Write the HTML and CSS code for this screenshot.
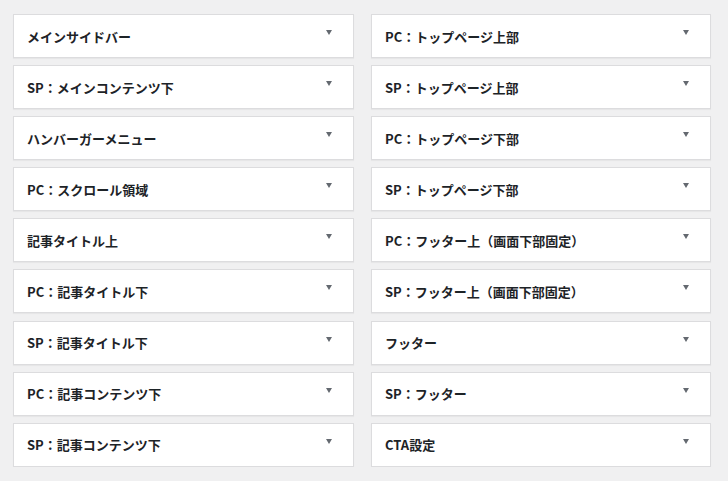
FILE: index.html
```html
<!DOCTYPE html>
<html lang="ja">
<head>
    <meta charset="UTF-8">
    <meta name="viewport" content="width=device-width, initial-scale=1.0">
    <title>ウィジェット</title>
    <link rel="stylesheet" href="styles.css">
</head>
<body>
    <div class="widget-areas">
        <div class="column">
            <div class="area"><h3>メインサイドバー</h3><span class="toggle"></span></div>
            <div class="area"><h3>SP：メインコンテンツ下</h3><span class="toggle"></span></div>
            <div class="area"><h3>ハンバーガーメニュー</h3><span class="toggle"></span></div>
            <div class="area"><h3>PC：スクロール領域</h3><span class="toggle"></span></div>
            <div class="area"><h3>記事タイトル上</h3><span class="toggle"></span></div>
            <div class="area"><h3>PC：記事タイトル下</h3><span class="toggle"></span></div>
            <div class="area"><h3>SP：記事タイトル下</h3><span class="toggle"></span></div>
            <div class="area"><h3>PC：記事コンテンツ下</h3><span class="toggle"></span></div>
            <div class="area"><h3>SP：記事コンテンツ下</h3><span class="toggle"></span></div>
        </div>

        <div class="column">
            <div class="area"><h3>PC：トップページ上部</h3><span class="toggle"></span></div>
            <div class="area"><h3>SP：トップページ上部</h3><span class="toggle"></span></div>
            <div class="area"><h3>PC：トップページ下部</h3><span class="toggle"></span></div>
            <div class="area"><h3>SP：トップページ下部</h3><span class="toggle"></span></div>
            <div class="area"><h3>PC：フッター上（画面下部固定）</h3><span class="toggle"></span></div>
            <div class="area"><h3>SP：フッター上（画面下部固定）</h3><span class="toggle"></span></div>
            <div class="area"><h3>フッター</h3><span class="toggle"></span></div>
            <div class="area"><h3>SP：フッター</h3><span class="toggle"></span></div>
            <div class="area"><h3>CTA設定</h3><span class="toggle"></span></div>
        </div>
    </div>
</body>
</html>
```

FILE: styles.css
```css
* {
    margin: 0;
    padding: 0;
    box-sizing: border-box;
}

body {
    background: #f0f0f1;
    font-family: "Noto Sans CJK JP", "Noto Sans", sans-serif;
    color: #1d2327;
    padding: 14px 17px 0 13px;
}

.widget-areas {
    display: grid;
    grid-template-columns: 341px 340px;
    column-gap: 17px;
}

.column {
    display: flex;
    flex-direction: column;
    gap: 7.1px;
}

.area {
    display: flex;
    align-items: center;
    justify-content: space-between;
    height: 44px;
    background: #fff;
    border: 1px solid #dcdcde;
    box-shadow: 0 1px 1px rgba(0, 0, 0, 0.04);
    padding: 0 21px 0 13px;
}

.area h3 {
    font-size: 13px;
    font-weight: 700;
    line-height: 1;
}

.toggle {
    width: 0;
    height: 0;
    border-left: 3.5px solid transparent;
    border-right: 3.5px solid transparent;
    border-top: 5px solid #646970;
    margin-top: -7px;
}
```
